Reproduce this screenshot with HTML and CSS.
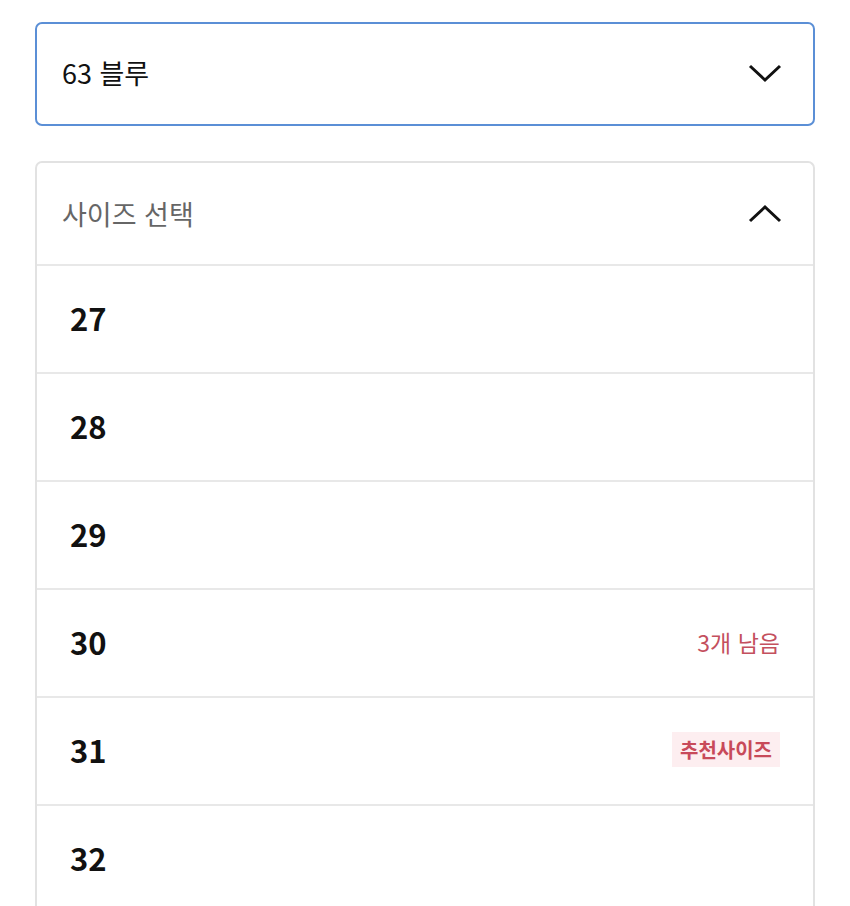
FILE: index.html
```html
<!DOCTYPE html>
<html lang="ko">
<head>
<meta charset="UTF-8">
<meta name="viewport" content="width=device-width, initial-scale=1.0">
<title>옵션 선택</title>
<link rel="stylesheet" href="styles.css">
</head>
<body>
<div class="container">
    <div class="select select-active">
        <span class="select-label">63 블루</span>
        <svg class="chevron" width="34" height="20" viewBox="0 0 34 20"><path d="M2 3 L17 17 L32 3" fill="none" stroke="#111" stroke-width="3"/></svg>
    </div>

    <div class="size-list">
        <div class="size-header">
            <span class="size-title">사이즈 선택</span>
            <svg class="chevron" width="34" height="20" viewBox="0 0 34 20"><path d="M2 17 L17 3 L32 17" fill="none" stroke="#111" stroke-width="3"/></svg>
        </div>
        <div class="size-row"><span class="size-num">27</span></div>
        <div class="size-row"><span class="size-num">28</span></div>
        <div class="size-row"><span class="size-num">29</span></div>
        <div class="size-row"><span class="size-num">30</span><span class="stock">3개 남음</span></div>
        <div class="size-row"><span class="size-num">31</span><span class="badge">추천사이즈</span></div>
        <div class="size-row"><span class="size-num">32</span></div>
    </div>
</div>
</body>
</html>
```

FILE: styles.css
```css
body {
    margin: 0;
    background-color: #fff;
    font-family: "Noto Sans CJK KR", "Noto Sans", sans-serif;
    color: #111;
}

.container {
    padding: 22px 35px 0;
}

.select {
    display: flex;
    align-items: center;
    justify-content: space-between;
    height: 104px;
    box-sizing: border-box;
    padding: 0 31px 3px 25px;
    border: 2px solid #5b8fd6;
    border-radius: 7px;
}

.select-label {
    font-size: 27px;
    color: #111;
}

.chevron {
    display: block;
}

.size-list {
    margin-top: 35px;
    border: 2px solid #e2e2e2;
    border-bottom: none;
    border-radius: 7px 7px 0 0;
}

.size-header {
    display: flex;
    align-items: center;
    justify-content: space-between;
    height: 101px;
    padding: 0 31px 0 25px;
}

.size-title {
    font-size: 27px;
    color: #666;
}

.size-row {
    display: flex;
    align-items: center;
    justify-content: space-between;
    height: 103px;
    padding: 0 33px 3px 33px;
    border-top: 2px solid #e8e8e8;
}

.size-num {
    font-size: 31px;
    font-weight: bold;
    color: #111;
}

.stock {
    font-size: 23px;
    color: #c4505e;
}

.badge {
    font-size: 20px;
    font-weight: bold;
    color: #c84a5a;
    background-color: #fdeef0;
    padding: 3px 8px;
}
```
